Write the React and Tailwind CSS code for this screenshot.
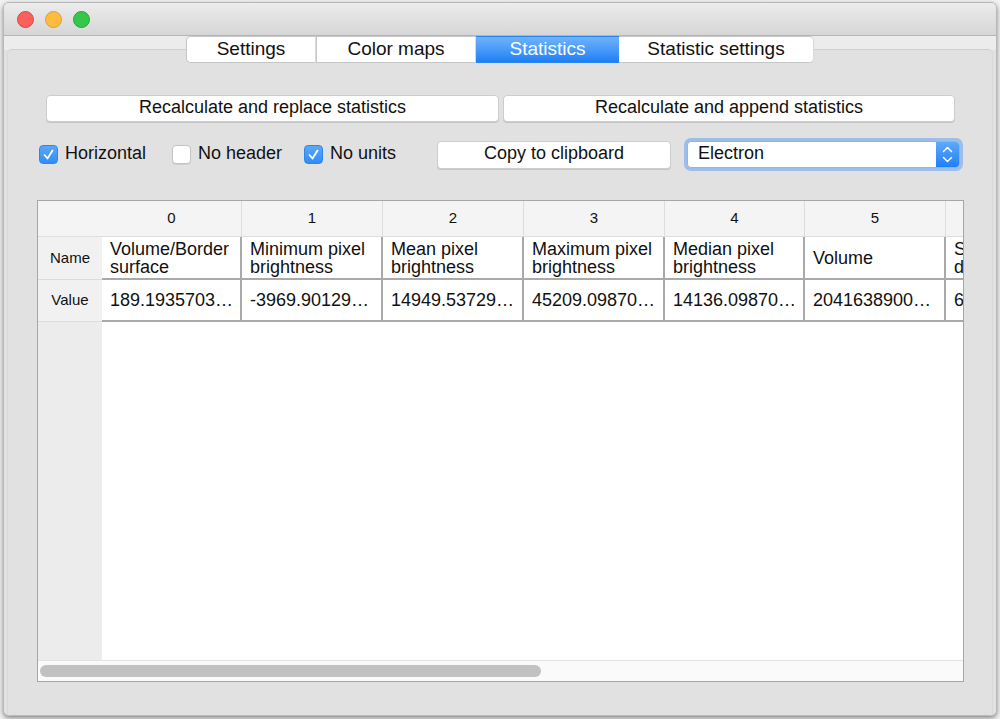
import React from 'react';

const font = "font-['Liberation_Sans',Arial,Helvetica,sans-serif]";

const tabs = [
  { label: 'Settings', w: 'w-[130px]', cls: 'rounded-l-[5px] border-l' },
  { label: 'Color maps', w: 'w-[160px]', cls: 'border-l' },
  { label: 'Statistics', w: 'w-[143px]', active: true },
  { label: 'Statistic settings', w: 'w-[195px]', cls: 'rounded-r-[5px] border-r' },
];

const columns = [
  { w: 'w-[140px]', head: '0', name: ['Volume/Border', 'surface'], value: '189.1935703…' },
  { w: 'w-[141px]', head: '1', name: ['Minimum pixel', 'brightness'], value: '-3969.90129…' },
  { w: 'w-[141px]', head: '2', name: ['Mean pixel', 'brightness'], value: '14949.53729…' },
  { w: 'w-[141px]', head: '3', name: ['Maximum pixel', 'brightness'], value: '45209.09870…' },
  { w: 'w-[140px]', head: '4', name: ['Median pixel', 'brightness'], value: '14136.09870…' },
  { w: 'w-[141px]', head: '5', name: ['Volume'], value: '2041638900…' },
  // last column is scrolled mostly out of view
  { w: 'w-[140px]', head: '', name: ['S', 'd'], value: '6' },
];

const Check = ({ checked, label, w }) => (
  <div className={`flex items-center shrink-0 ${w}`}>
    {checked ? (
      <span className="w-[19px] h-[19px] rounded-[4px] bg-gradient-to-b from-[#5aa8fb] to-[#2f8cf5] border border-[#2f86ea] flex items-center justify-center">
        <svg width="13" height="13" viewBox="0 0 13 13">
          <polyline points="2.5,7 5.5,10.5 10.5,2.5" fill="none" stroke="white" strokeWidth="1.8" strokeLinecap="round" strokeLinejoin="round" />
        </svg>
      </span>
    ) : (
      <span className="w-[19px] h-[19px] rounded-[4px] bg-white border border-[#c4c4c4] shadow-[0_1px_0_rgba(0,0,0,0.08)]" />
    )}
    <span className="ml-[7px] text-[18px] text-[#111] -mt-[2px]">{label}</span>
  </div>
);

const btn = 'bg-white rounded-[4px] border border-[#cdcdcd] shadow-[0_1px_0_rgba(0,0,0,0.12)] text-[18px] leading-[20px] text-[#111] pb-[3px]';

const App = () => {
  return (
    <div className={`${font} w-[1000px] h-[719px] bg-[#f2f2f2] pt-[2px] px-[3px] overflow-hidden`}>
      <div className="w-[994px] h-[714px] rounded-[6px] bg-[#e1e1e1] border border-[#b9b9b9] shadow-[0_2px_5px_rgba(0,0,0,0.45)] overflow-hidden flex flex-col">
        {/* Title bar */}
        <div className="h-[33px] shrink-0 bg-gradient-to-b from-[#ececec] to-[#d6d6d6] border-b border-[#b6b6b6] flex items-center pl-[13px] gap-[11px]">
          <span className="w-[17px] h-[17px] rounded-full bg-[#fc605c] border border-[#e0443e]" />
          <span className="w-[17px] h-[17px] rounded-full bg-[#fdbc40] border border-[#dea123]" />
          <span className="w-[17px] h-[17px] rounded-full bg-[#34c84a] border border-[#1aab29]" />
        </div>

        {/* Tab widget */}
        <div className="flex-1 flex flex-col px-[3px] bg-gradient-to-b from-[#ececec] from-[14px] to-[#e1e1e1] to-[14px]">
          <div className="flex justify-center relative z-10 h-[27px] shrink-0">
            {tabs.map((t) => (
              <div
                key={t.label}
                className={`${t.w} h-[27px] flex items-center justify-center text-[19px] pb-[1px] border-b border-t ${
                  t.active
                    ? 'bg-gradient-to-b from-[#6db3fb] to-[#1b7ff6] text-white border-[#2a86ee]'
                    : 'bg-white text-[#111] border-[#c6c6c6] border-r border-r-[#dadada]'
                } ${t.cls || ''}`}
              >
                {t.label}
              </div>
            ))}
          </div>

          <div className="-mt-[14px] flex-1 rounded-t-[5px] border-t border-x border-[#cfcfcf] border-x-[#d9d9d9] bg-[#e1e1e1] flex flex-col">
            {/* Recalculate buttons */}
            <div className="flex gap-[4px] pl-[38px] mt-[45px]">
              <button className={`w-[453px] h-[27px] ${btn}`}>Recalculate and replace statistics</button>
              <button className={`w-[452px] h-[27px] ${btn}`}>Recalculate and append statistics</button>
            </div>

            {/* Options row */}
            <div className="flex items-center pl-[31px] mt-[16px] h-[33px]">
              <Check checked label="Horizontal" w="w-[133px]" />
              <Check label="No header" w="w-[132px]" />
              <Check checked label="No units" w="w-[133px]" />
              <button className={`w-[234px] h-[28px] ${btn}`}>Copy to clipboard</button>
              <div className="ml-[16px] w-[273px] h-[27px] rounded-[4px] bg-white border border-[#8fb5e6] shadow-[0_0_0_3px_rgba(112,166,236,0.6)] flex items-center">
                <span className="flex-1 pl-[10px] pb-[2px] text-[18px] text-[#111]">Electron</span>
                <span className="w-[23px] h-full rounded-r-[3px] bg-gradient-to-b from-[#5eaafb] to-[#1c7ff6] flex flex-col items-center justify-center gap-[3px]">
                  <svg width="11" height="7" viewBox="0 0 11 7">
                    <polyline points="1.5,5.5 5.5,1.5 9.5,5.5" fill="none" stroke="white" strokeWidth="1.5" strokeLinecap="round" strokeLinejoin="round" />
                  </svg>
                  <svg width="11" height="7" viewBox="0 0 11 7">
                    <polyline points="1.5,1.5 5.5,5.5 9.5,1.5" fill="none" stroke="white" strokeWidth="1.5" strokeLinecap="round" strokeLinejoin="round" />
                  </svg>
                </span>
              </div>
            </div>

            {/* Table */}
            <div className="ml-[29px] mt-[29px] w-[927px] h-[482px] border border-[#a6a6a6] bg-white flex flex-col overflow-hidden">
              <div className="flex-1 flex flex-col overflow-hidden">
                {/* column header row */}
                <div className="flex h-[36px] shrink-0 bg-[#f4f4f4] border-b border-[#dedede]">
                  <div className="w-[64px] shrink-0" />
                  {columns.map((c, i) => (
                    <div key={i} className={`${c.w} shrink-0 flex items-center justify-center text-[15px] text-[#111] border-r border-[#dddddd]`}>
                      {c.head}
                    </div>
                  ))}
                </div>

                {/* Name row */}
                <div className="flex h-[43px] shrink-0">
                  <div className="w-[64px] shrink-0 bg-[#f1f1f1] border-b border-[#dcdcdc] flex items-center justify-center text-[15px] text-[#111]">
                    Name
                  </div>
                  {columns.map((c, i) => (
                    <div key={i} className={`${c.w} shrink-0 bg-white border-r-2 border-b-2 border-[#a9a9a9] pl-[8px] flex flex-col justify-center text-[18px] leading-[18px] text-[#111] whitespace-nowrap overflow-hidden`}>
                      {c.name.map((l) => (
                        <span key={l}>{l}</span>
                      ))}
                    </div>
                  ))}
                </div>

                {/* Value row */}
                <div className="flex h-[42px] shrink-0">
                  <div className="w-[64px] shrink-0 bg-[#f1f1f1] border-b border-[#dcdcdc] flex items-center justify-center text-[15px] text-[#111]">
                    Value
                  </div>
                  {columns.map((c, i) => (
                    <div key={i} className={`${c.w} shrink-0 bg-white border-r-2 border-b-2 border-[#a9a9a9] pl-[8px] flex items-center text-[18px] text-[#111] whitespace-nowrap overflow-hidden`}>
                      {c.value}
                    </div>
                  ))}
                </div>

                {/* empty area */}
                <div className="flex-1 flex">
                  <div className="w-[64px] shrink-0 bg-[#ececec]" />
                  <div className="flex-1 bg-white" />
                </div>
              </div>

              {/* horizontal scrollbar */}
              <div className="h-[21px] shrink-0 bg-[#fafafa] border-t border-[#e3e3e3] pl-[2px] pt-[4px]">
                <div className="w-[501px] h-[12px] rounded-full bg-[#c1c1c1]" />
              </div>
            </div>
          </div>
        </div>
      </div>
    </div>
  );
};

export default App;
